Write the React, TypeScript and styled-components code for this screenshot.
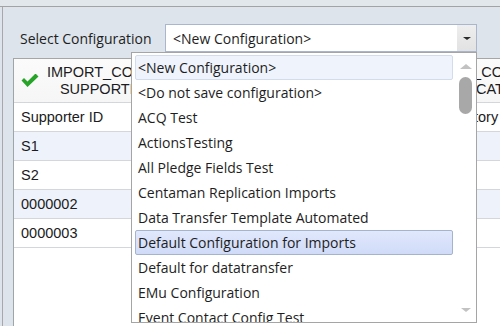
import React from 'react';
import styled, { createGlobalStyle } from 'styled-components';

const uiFont = `'Open Sans', 'Noto Sans', sans-serif`;
const gridFont = `'Liberation Sans', Arial, sans-serif`;

const GlobalStyle = createGlobalStyle`
  html, body {
    margin: 0;
    padding: 0;
  }
  body {
    background: #dde4ec;
    overflow: hidden;
  }
`;

const Window = styled.div`
  width: 500px;
  height: 326px;
  position: relative;
  overflow: hidden;
  background: #dde4ec;
  display: flex;
  flex-direction: column;
`;

const TopStrip = styled.div`
  flex: none;
  height: 6px;
  background: #e2e7ec;
  border-bottom: 1px solid #a3a3a3;
`;

const Panel = styled.div`
  flex: 1;
  min-height: 0;
  margin-left: 2px;
  border-left: 1px solid #a8a8a8;
  display: flex;
  flex-direction: column;
  padding: 17px 0 0 10px;
`;

const Toolbar = styled.div`
  flex: none;
  display: flex;
  align-items: center;
  height: 28px;
  padding-left: 7px;
`;

const Label = styled.div`
  width: 145px;
  font-family: ${uiFont};
  font-size: 14px;
  color: #1e1e1e;
  white-space: nowrap;
`;

const Combo = styled.div`
  box-sizing: border-box;
  width: 312px;
  height: 28px;
  display: flex;
  background: #fff;
  border: 1px solid #a9b6cc;
`;

const ComboText = styled.div`
  flex: 1;
  display: flex;
  align-items: center;
  padding-left: 7px;
  font-family: ${uiFont};
  font-size: 14px;
  color: #1e1e1e;
`;

const ComboButton = styled.div`
  width: 19px;
  display: flex;
  align-items: center;
  justify-content: center;
  background: linear-gradient(#eeeeee, #e2e2e2);
`;

const ArrowDown = styled.div<{ $size: number; $color: string }>`
  width: 0;
  height: 0;
  border-left: ${(p) => p.$size}px solid transparent;
  border-right: ${(p) => p.$size}px solid transparent;
  border-top: ${(p) => Math.round(p.$size * 0.8)}px solid ${(p) => p.$color};
`;

const ArrowUp = styled.div<{ $size: number; $color: string }>`
  width: 0;
  height: 0;
  border-left: ${(p) => p.$size}px solid transparent;
  border-right: ${(p) => p.$size}px solid transparent;
  border-bottom: ${(p) => Math.round(p.$size * 0.8)}px solid ${(p) => p.$color};
`;

const Grid = styled.div`
  flex: 1;
  min-height: 0;
  margin-top: 6px;
  background: #fff;
  border-top: 1px solid #a6a6a6;
  border-left: 1px solid #a0a5aa;
  font-family: ${gridFont};
  font-size: 14.5px;
  color: #1b1b22;
  overflow: hidden;
`;

const HeaderRow = styled.div`
  display: flex;
  height: 43px;
  background: linear-gradient(#fbfbfb, #f6f6f6);
  border-bottom: 1px solid #d3d7dc;
`;

const HeaderCell = styled.div<{ $width: number }>`
  flex: none;
  box-sizing: border-box;
  width: ${(p) => p.$width}px;
  display: flex;
  align-items: center;
  gap: 8px;
  padding: 0 7px;
  border-right: 1px solid #d3d7dc;
`;

const HeaderText = styled.div`
  text-align: center;
  line-height: 17px;
  white-space: pre;
  padding-top: 1px;
`;

const Row = styled.div<{ $alt: boolean }>`
  display: flex;
  height: 28px;
  background: ${(p) => (p.$alt ? '#eef3fb' : '#ffffff')};
  border-bottom: 1px solid #d3d7dc;
`;

const Cell = styled.div<{ $width: number }>`
  flex: none;
  box-sizing: border-box;
  width: ${(p) => p.$width}px;
  display: flex;
  align-items: center;
  padding: 0 7px;
  white-space: nowrap;
  overflow: hidden;
  border-right: 1px solid #d3d7dc;
`;

const Dropdown = styled.div`
  position: absolute;
  left: 131px;
  top: 52px;
  box-sizing: border-box;
  width: 346px;
  height: 271px;
  background: #fff;
  border: 1px solid #a5a5a5;
  display: flex;
  gap: 2px;
  padding: 2px 0 0 3px;
  overflow: hidden;
`;

const List = styled.div`
  width: 318px;
  display: flex;
  flex-direction: column;
`;

const Item = styled.div<{ $state?: 'selected' | 'hover' }>`
  flex: none;
  box-sizing: border-box;
  height: 25px;
  display: flex;
  align-items: center;
  padding-left: 2px;
  border-radius: 2px;
  font-family: ${uiFont};
  font-size: 14px;
  color: #1e1e1e;
  white-space: nowrap;
  border: 1px solid
    ${(p) =>
      p.$state === 'hover' ? '#a6b3cc' : p.$state === 'selected' ? '#d3dcec' : 'transparent'};
  background: ${(p) =>
    p.$state === 'hover'
      ? 'linear-gradient(#e0e8fc, #d0dbf8)'
      : p.$state === 'selected'
      ? '#eff3fc'
      : 'transparent'};
`;

const ScrollBar = styled.div`
  width: 21px;
  display: flex;
  flex-direction: column;
  align-items: center;
  padding: 9px 0 10px;
  box-sizing: border-box;
`;

const Thumb = styled.div`
  width: 13px;
  height: 37px;
  margin-top: 8px;
  border-radius: 7px;
  background: #a8a8a8;
`;

const Spacer = styled.div`
  flex: 1;
`;

const CheckIcon = () => (
  <svg width="18" height="13" viewBox="0 0 18 13">
    <path d="M0.5 6.5 L3 4 L6.5 7.5 L14.5 -0.5 L17.5 2.5 L6.5 13 Z" fill="#25a428" />
  </svg>
);

const COL1 = 370;
const COL2 = 320;

const rows = [
  ['Supporter ID', 'Segment History'],
  ['S1', ''],
  ['S2', ''],
  ['0000002', ''],
  ['0000003', ''],
];

const options = [
  '<New Configuration>',
  '<Do not save configuration>',
  'ACQ Test',
  'ActionsTesting',
  'All Pledge Fields Test',
  'Centaman Replication Imports',
  'Data Transfer Template Automated',
  'Default Configuration for Imports',
  'Default for datatransfer',
  'EMu Configuration',
  'Event Contact Config Test',
];

export default function App() {
  return (
    <>
      <GlobalStyle />
      <Window>
        <TopStrip />
        <Panel>
          <Toolbar>
            <Label>Select Configuration</Label>
            <Combo>
              <ComboText>&lt;New Configuration&gt;</ComboText>
              <ComboButton>
                <ArrowDown $size={4} $color="#2a2a2a" />
              </ComboButton>
            </Combo>
          </Toolbar>
          <Grid>
            <HeaderRow>
              <HeaderCell $width={COL1}>
                <CheckIcon />
                <HeaderText>{'IMPORT_CONSTITUENT_\nSUPPORTER_CODES'}</HeaderText>
              </HeaderCell>
              <HeaderCell $width={COL2}>
                <CheckIcon />
                <HeaderText>{'IMPORT_CONSTITUENT_\nID_CATEGORY'}</HeaderText>
              </HeaderCell>
            </HeaderRow>
            {rows.map((r, i) => (
              <Row key={i} $alt={i % 2 === 1}>
                <Cell $width={COL1}>{r[0]}</Cell>
                <Cell $width={COL2}>{r[1]}</Cell>
              </Row>
            ))}
          </Grid>
        </Panel>
        <Dropdown>
          <List>
            {options.map((o, i) => (
              <Item key={o} $state={i === 0 ? 'selected' : i === 7 ? 'hover' : undefined}>
                {o}
              </Item>
            ))}
          </List>
          <ScrollBar>
            <ArrowUp $size={6} $color="#c2c2c2" />
            <Thumb />
            <Spacer />
            <ArrowDown $size={5} $color="#c2c2c2" />
          </ScrollBar>
        </Dropdown>
      </Window>
    </>
  );
}
